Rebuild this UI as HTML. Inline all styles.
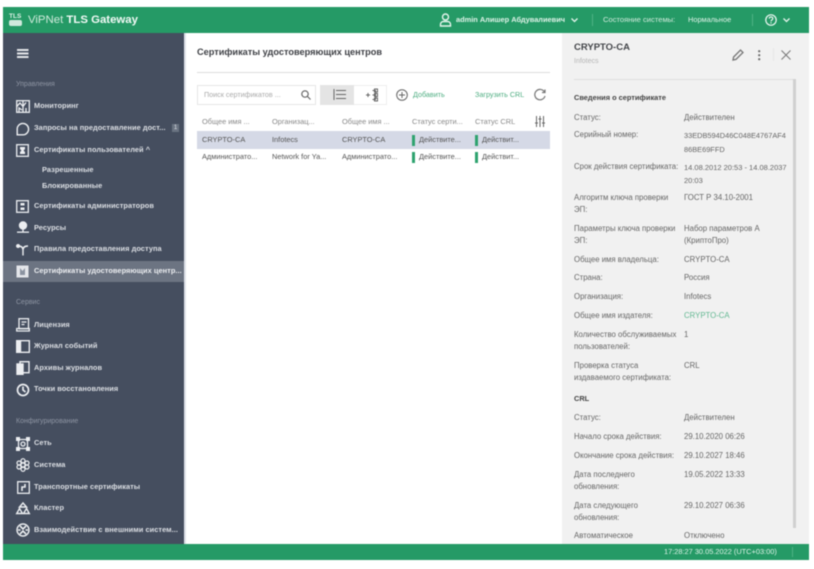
<!DOCTYPE html>
<html><head><meta charset="utf-8">
<style>
html,body{margin:0;padding:0;background:#fff}
body{width:814px;height:569px;overflow:hidden;position:relative;font-family:"Liberation Sans","DejaVu Sans",sans-serif}
#w{position:absolute;left:0;top:0;width:814px;height:569px;filter:blur(.6px);overflow:hidden}
.a,.t,.h,.n,.g,.l,.v{position:absolute;white-space:nowrap}
.n{left:34px;font-size:7.4px;line-height:10px;color:#dcdfe4;font-weight:bold;letter-spacing:.05px}
.g{left:16px;font-size:7px;line-height:10px;color:#8e95a3}
.t{font-size:7.4px;line-height:10px;color:#555}
.h{font-size:7.4px;line-height:10px;color:#888}
.l,.v{font-size:7.8px;line-height:12px;color:#666}
.l{left:574px}.v{left:684px}
svg{position:absolute;overflow:visible}
</style></head><body><div id="w">
<div class="a" style="left:3px;top:7px;width:806px;height:553px;background:#fff"></div>
<div class="a" style="left:3px;top:7px;width:806px;height:26px;background:#259a66"></div>
<div class="a" style="left:3px;top:33px;width:181px;height:511px;background:#454e5f"></div>
<div class="a" style="left:184px;top:33px;width:2px;height:511px;background:#dfe3ea"></div>
<div class="a" style="left:3px;top:261px;width:181px;height:21px;background:#6c7482"></div>
<div class="a" style="left:562px;top:33px;width:247px;height:511px;background:#f1f1f1"></div>
<div class="a" style="left:3px;top:544px;width:806px;height:16px;background:#259a66"></div>

<!-- header -->
<div class="a" style="left:9px;top:13px;font-size:6.5px;line-height:7px;font-weight:bold;color:#dff3e8">TLS</div>
<div class="a" style="left:9px;top:20px;width:13px;height:6px;background:#cfe9dc;border-radius:2px"></div>
<div class="a" style="left:28px;top:13px;font-size:11.4px;line-height:14px;color:#cfeadb">ViPNet <b style="color:#f2faf6;font-weight:bold">TLS Gateway</b></div>
<svg style="left:439px;top:13px" width="13" height="14" fill="none" stroke="#e6f5ed" stroke-width="1.4"><circle cx="6.500" cy="4" r="3"/><path d="M1.500 13v-1.500c0-2 1.500-3 3-3h4c1.500 0 3 1 3 3V13z"/></svg>
<div class="a" style="left:456px;top:15px;font-size:7.400px;line-height:10px;font-weight:bold;color:#dff3e8">admin Алишер Абдувалиевич</div>
<svg style="left:571px;top:18px" width="7" height="5" fill="none" stroke="#e6f5ed" stroke-width="1.300"><path d="M.5 .5L3.500 3.500 6.500 .5"/></svg>
<div class="a" style="left:592px;top:14px;width:1px;height:12px;background:#4fb285"></div>
<div class="a" style="left:603px;top:15px;font-size:7.600px;line-height:10px;color:#cfeadb">Состояние системы:</div>
<div class="a" style="left:688px;top:15px;font-size:7.400px;line-height:10px;color:#dff3e8">Нормальное</div>
<div class="a" style="left:752px;top:14px;width:1px;height:12px;background:#4fb285"></div>
<svg style="left:765px;top:14px" width="12" height="12" fill="none" stroke="#eef8f3" stroke-width="1.200"><circle cx="6" cy="6" r="5.200"/><path d="M4.300 4.600c0-2.200 3.500-2.200 3.500 0 0 1.300-1.800 1.300-1.800 2.800M6 8.300v1.200"/></svg>
<svg style="left:783px;top:18px" width="7" height="5" fill="none" stroke="#e6f5ed" stroke-width="1.300"><path d="M.5 .5L3.500 3.500 6.500 .5"/></svg>

<!-- sidebar -->
<svg style="left:17px;top:49px" width="12" height="10" fill="#e3e5e9"><rect width="11.500" height="2"/><rect y="3.500" width="11.500" height="2"/><rect y="7" width="11.500" height="2"/></svg>
<div class="g" style="top:80px">Управления</div>
<div class="n" style="top:101px">Мониторинг</div>
<svg style="left:16px;top:100px" width="14" height="13" fill="none" stroke="#eceef1" stroke-width="1.300"><rect x=".7" y=".7" width="12.600" height="11.600"/><path d="M.7 6.500L4 3l3 3.500 3-4M7 .7v11.600M3 12V8l3 2M10 12V8"/></svg>
<div class="n" style="top:123px">Запросы на предоставление дост...</div>
<svg style="left:16px;top:122px" width="14" height="14" fill="none" stroke="#eceef1" stroke-width="1.400"><path d="M1.200 12.800V7.500a5.700 5.700 0 1 1 5.700 5.300z"/></svg>
<div class="a" style="left:172px;top:124px;width:7px;height:8px;background:#6a7382;color:#dfe2e7;font-size:6px;line-height:8px;text-align:center">1</div>
<div class="n" style="top:145px">Сертификаты пользователей ^</div>
<svg style="left:16px;top:144px" width="13" height="13" fill="none"><rect x=".7" y=".7" width="11.600" height="11.600" stroke="#eceef1" stroke-width="1.300"/><path d="M4 3h5v2L7.500 6.500 9 8v2H4V8l1.500-1.500L4 5z" fill="#eceef1"/></svg>
<div class="n" style="left:42px;top:165px">Разрешенные</div>
<div class="n" style="left:42px;top:181px">Блокированные</div>
<div class="n" style="top:201px">Сертификаты администраторов</div>
<svg style="left:16px;top:200px" width="13" height="13" fill="none"><rect x=".7" y=".7" width="11.600" height="11.600" stroke="#eceef1" stroke-width="1.300"/><rect x="4.500" y="3" width="4" height="2.500" fill="#eceef1"/><rect x="4.500" y="7.500" width="4" height="2.500" fill="#eceef1"/></svg>
<div class="n" style="top:223px">Ресурсы</div>
<svg style="left:17px;top:221px" width="12" height="14" fill="#eceef1"><circle cx="6" cy="4.500" r="4.200"/><rect x="5.300" y="8" width="1.400" height="3"/><rect x="0" y="10.500" width="12" height="1.300"/></svg>
<div class="n" style="top:244px">Правила предоставления доступа</div>
<svg style="left:16px;top:244px" width="14" height="12" fill="none" stroke="#eceef1" stroke-width="1.400"><path d="M2 2c3 0 5 1 5 4v5.500M12 2c-3 0-5 1-5 4"/><circle cx="2" cy="2" r="1.300" fill="#eceef1"/></svg>
<div class="n" style="top:266px;color:#eceef1">Сертификаты удостоверяющих центр...</div>
<svg style="left:16px;top:265px" width="13" height="13" fill="none"><rect x=".5" y=".5" width="12" height="12" fill="#e4e6ea"/><path d="M4 3l2.500 3L9 3v7H4z" fill="#8b93a0"/></svg>
<div class="g" style="top:298px">Сервис</div>
<div class="n" style="top:320px">Лицензия</div>
<svg style="left:16px;top:318px" width="14" height="14" fill="none" stroke="#eceef1" stroke-width="1.300"><rect x="3" y=".7" width="9.500" height="10"/><path d="M.7 13h12.600v-2.500H.7zM5.500 4h5M5.500 6.500h3"/></svg>
<div class="n" style="top:341px">Журнал событий</div>
<svg style="left:16px;top:340px" width="14" height="13" fill="none" stroke="#eceef1" stroke-width="1.400"><rect x=".7" y=".7" width="12.600" height="11.600"/><rect x="1" y="1" width="3.500" height="11" fill="#eceef1"/></svg>
<div class="n" style="top:363px">Архивы журналов</div>
<svg style="left:16px;top:361px" width="14" height="14" fill="none" stroke="#eceef1" stroke-width="1.400"><rect x="4" y=".7" width="9" height="11"/><rect x="1" y="3" width="6" height="10.300" fill="#eceef1"/></svg>
<div class="n" style="top:384px">Точки восстановления</div>
<svg style="left:16px;top:383px" width="14" height="14" fill="none" stroke="#eceef1" stroke-width="1.700"><circle cx="7" cy="7" r="5.500"/><path d="M7 3.500V7l2.500 2"/></svg>
<div class="g" style="top:417px">Конфигурирование</div>
<div class="n" style="top:438px">Сеть</div>
<svg style="left:16px;top:437px" width="14" height="14" fill="none" stroke="#eceef1" stroke-width="1.300"><path d="M2.500 2.500h9v9h-9z"/><rect x="0" y="0" width="4" height="4" fill="#eceef1" stroke="none"/><rect x="10" y="0" width="4" height="4" fill="#eceef1" stroke="none"/><rect x="0" y="10" width="4" height="4" fill="#eceef1" stroke="none"/><rect x="10" y="10" width="4" height="4" fill="#eceef1" stroke="none"/><circle cx="7" cy="7" r="2"/></svg>
<div class="n" style="top:460px">Система</div>
<svg style="left:16px;top:458px" width="14" height="14" fill="none" stroke="#eceef1" stroke-width="1.200"><circle cx="7" cy="7" r="2"/><circle cx="7" cy="2.700" r="2"/><circle cx="7" cy="11.300" r="2"/><circle cx="3" cy="5" r="2"/><circle cx="11" cy="5" r="2"/><circle cx="3" cy="9" r="2"/><circle cx="11" cy="9" r="2"/></svg>
<div class="n" style="top:482px">Транспортные сертификаты</div>
<svg style="left:17px;top:481px" width="13" height="13" fill="none" stroke="#eceef1" stroke-width="1.300"><rect x=".7" y=".7" width="11.600" height="11.600"/><path d="M8 3v3H5v4" stroke-width="1.600"/></svg>
<div class="n" style="top:503px">Кластер</div>
<svg style="left:16px;top:502px" width="14" height="13" fill="none" stroke="#eceef1" stroke-width="1.400"><path d="M7 1L10.500 5H3.500z"/><path d="M3.500 6.500L6.500 11.500H.7zM10.500 6.500L13.300 11.500H7.500z"/></svg>
<div class="n" style="top:525px">Взаимодействие с внешними систем...</div>
<svg style="left:16px;top:523px" width="14" height="14" fill="none" stroke="#eceef1" stroke-width="1.400"><circle cx="7" cy="7" r="6"/><path d="M4 3l3 3 3-3M4 11l3-3 3 3M2 7h2.500M9.500 7H12" stroke-width="1.600"/></svg>

<!-- main -->
<div class="a" style="left:197px;top:46px;font-size:9.200px;line-height:12px;font-weight:bold;color:#3d3f44">Сертификаты удостоверяющих центров</div>
<div class="a" style="left:197px;top:72px;width:353px;height:1px;background:#dcdcdc"></div>
<div class="a" style="left:197px;top:85px;width:117px;height:18px;border:1px solid #e6e6e6;box-sizing:content-box"></div>
<div class="a" style="left:204px;top:90px;font-size:7.200px;line-height:10px;color:#aaa">Поиск сертификатов ...</div>
<svg style="left:301px;top:90px" width="10" height="10" fill="none" stroke="#666" stroke-width="1.200"><circle cx="4" cy="4" r="3.200"/><path d="M6.500 6.500L9.500 9.500"/></svg>
<div class="a" style="left:320px;top:85px;width:34px;height:20px;background:#e4e4e4"></div>
<div class="a" style="left:354px;top:85px;width:32px;height:18px;border:1px solid #eee;border-left:0"></div>
<svg style="left:333px;top:89px" width="13" height="12" fill="none" stroke="#666" stroke-width="1"><path d="M3 1.500h10M3 5.500h10M3 9.500h10M1 0v11"/></svg>
<svg style="left:366px;top:89px" width="12" height="12" fill="none" stroke="#666" stroke-width="1"><path d="M0 6h4M2 4v4M6.500 1.500h3v9h-3M6.500 6h3"/><rect x="8.500" y="0" width="3" height="3"/><rect x="8.500" y="4.500" width="3" height="3"/><rect x="8.500" y="9" width="3" height="3"/></svg>
<svg style="left:396px;top:89px" width="12" height="12" fill="none" stroke="#666" stroke-width="1"><circle cx="6" cy="6" r="5.300"/><path d="M6 3v6M3 6h6"/></svg>
<div class="a" style="left:413px;top:90px;font-size:7.200px;line-height:10px;color:#4fae82">Добавить</div>
<div class="a" style="left:475px;top:90px;font-size:7.200px;line-height:10px;color:#4fae82">Загрузить CRL</div>
<svg style="left:534px;top:89px" width="12" height="12" fill="none" stroke="#777" stroke-width="1.200"><path d="M10.500 3A5.200 5.200 0 1 0 11 7M11 .5V3.500H8"/></svg>

<div class="h" style="left:202px;top:117px">Общее имя ...</div>
<div class="h" style="left:272px;top:117px">Организац...</div>
<div class="h" style="left:342px;top:117px">Общее имя ...</div>
<div class="h" style="left:412px;top:117px">Статус серти...</div>
<div class="h" style="left:475px;top:117px">Статус CRL</div>
<svg style="left:535px;top:116px" width="10" height="11" fill="none" stroke="#666" stroke-width="1"><path d="M1.500 0v11M5 0v11M8.500 0v11M0 7h3M3.500 3h3M7 7h3"/></svg>
<div class="a" style="left:197px;top:131px;width:353px;height:18px;background:#d5d9e6"></div>
<div class="t" style="left:202px;top:135px">CRYPTO-CA</div>
<div class="t" style="left:272px;top:135px">Infotecs</div>
<div class="t" style="left:342px;top:135px">CRYPTO-CA</div>
<div class="a" style="left:412px;top:135px;width:2.500px;height:11px;background:#2fa36f"></div>
<div class="t" style="left:419px;top:135px">Действите...</div>
<div class="a" style="left:475px;top:135px;width:2.500px;height:11px;background:#2fa36f"></div>
<div class="t" style="left:482px;top:135px">Действит...</div>
<div class="t" style="left:202px;top:152px">Администрато...</div>
<div class="t" style="left:272px;top:152px">Network for Ya...</div>
<div class="t" style="left:342px;top:152px">Администрато...</div>
<div class="a" style="left:412px;top:152px;width:2.500px;height:11px;background:#2fa36f"></div>
<div class="t" style="left:419px;top:152px">Действите...</div>
<div class="a" style="left:475px;top:152px;width:2.500px;height:11px;background:#2fa36f"></div>
<div class="t" style="left:482px;top:152px">Действит...</div>

<!-- right panel -->
<div class="a" style="left:574px;top:42px;font-size:9.500px;line-height:12px;font-weight:bold;color:#44464a">CRYPTO-CA</div>
<div class="a" style="left:574px;top:57px;font-size:7px;line-height:10px;color:#b5b5b5">Infotecs</div>
<svg style="left:732px;top:49px" width="12" height="12" fill="none" stroke="#777" stroke-width="1.300"><path d="M1 11l.6-3L8.500 1l2.500 2.500L4 10.400z"/></svg>
<svg style="left:758px;top:50px" width="3" height="11" fill="#666"><circle cx="1.200" cy="1.200" r="1.100"/><circle cx="1.200" cy="5.200" r="1.100"/><circle cx="1.200" cy="9.200" r="1.100"/></svg>
<div class="a" style="left:773px;top:48px;width:1px;height:13px;background:#e6e6e6"></div>
<svg style="left:781px;top:50px" width="10" height="10" fill="none" stroke="#777" stroke-width="1"><path d="M.5 .5l9 9M9.500 .5l-9 9"/></svg>
<div class="a" style="left:574px;top:79px;width:220px;height:1px;background:#dedede"></div>
<div class="a" style="left:793px;top:79px;width:3px;height:449px;background:#d0d0d0"></div>

<div class="l" style="top:92px;color:#444;font-weight:bold;font-size:7.400px">Сведения о сертификате</div>
<div class="l" style="top:112px">Статус:</div><div class="v" style="top:112px">Действителен</div>
<div class="l" style="top:129px">Серийный номер:</div><div class="v" style="top:129px;line-height:14px;font-size:7.400px">33EDB594D46C048E4767AF4<br>86BE69FFD</div>
<div class="l" style="top:161px">Срок действия сертификата:</div><div class="v" style="top:161px;line-height:13px;font-size:7.500px">14.08.2012 20:53 - 14.08.2037<br>20:03</div>
<div class="l" style="top:192px">Алгоритм ключа проверки<br>ЭП:</div><div class="v" style="top:192px">ГОСТ Р 34.10-2001</div>
<div class="l" style="top:223px">Параметры ключа проверки<br>ЭП:</div><div class="v" style="top:223px">Набор параметров А<br>(КриптоПро)</div>
<div class="l" style="top:254px">Общее имя владельца:</div><div class="v" style="top:254px">CRYPTO-CA</div>
<div class="l" style="top:272px">Страна:</div><div class="v" style="top:272px">Россия</div>
<div class="l" style="top:291px">Организация:</div><div class="v" style="top:291px">Infotecs</div>
<div class="l" style="top:310px">Общее имя издателя:</div><div class="v" style="top:310px;color:#63b892">CRYPTO-CA</div>
<div class="l" style="top:329px">Количество обслуживаемых<br>пользователей:</div><div class="v" style="top:329px">1</div>
<div class="l" style="top:360px">Проверка статуса<br>издаваемого сертификата:</div><div class="v" style="top:360px">CRL</div>
<div class="l" style="top:393px;color:#444;font-weight:bold;font-size:7.400px">CRL</div>
<div class="l" style="top:412px">Статус:</div><div class="v" style="top:412px">Действителен</div>
<div class="l" style="top:431px">Начало срока действия:</div><div class="v" style="top:431px">29.10.2020 06:26</div>
<div class="l" style="top:450px">Окончание срока действия:</div><div class="v" style="top:450px">29.10.2027 18:46</div>
<div class="l" style="top:469px">Дата последнего<br>обновления:</div><div class="v" style="top:469px">19.05.2022 13:33</div>
<div class="l" style="top:500px">Дата следующего<br>обновления:</div><div class="v" style="top:500px">29.10.2027 06:36</div>
<div class="l" style="top:530px">Автоматическое</div><div class="v" style="top:530px">Отключено</div>
<div class="a" style="left:562px;top:544px;width:247px;height:16px;background:#259a66"></div>
<div class="a" style="left:664px;top:547px;font-size:7.400px;line-height:10px;color:#dff3e8">17:28:27 30.05.2022 (UTC+03:00)</div>
<div class="a" style="left:792px;top:547px;width:1px;height:10px;background:#4fb285"></div>
</div></body></html>
